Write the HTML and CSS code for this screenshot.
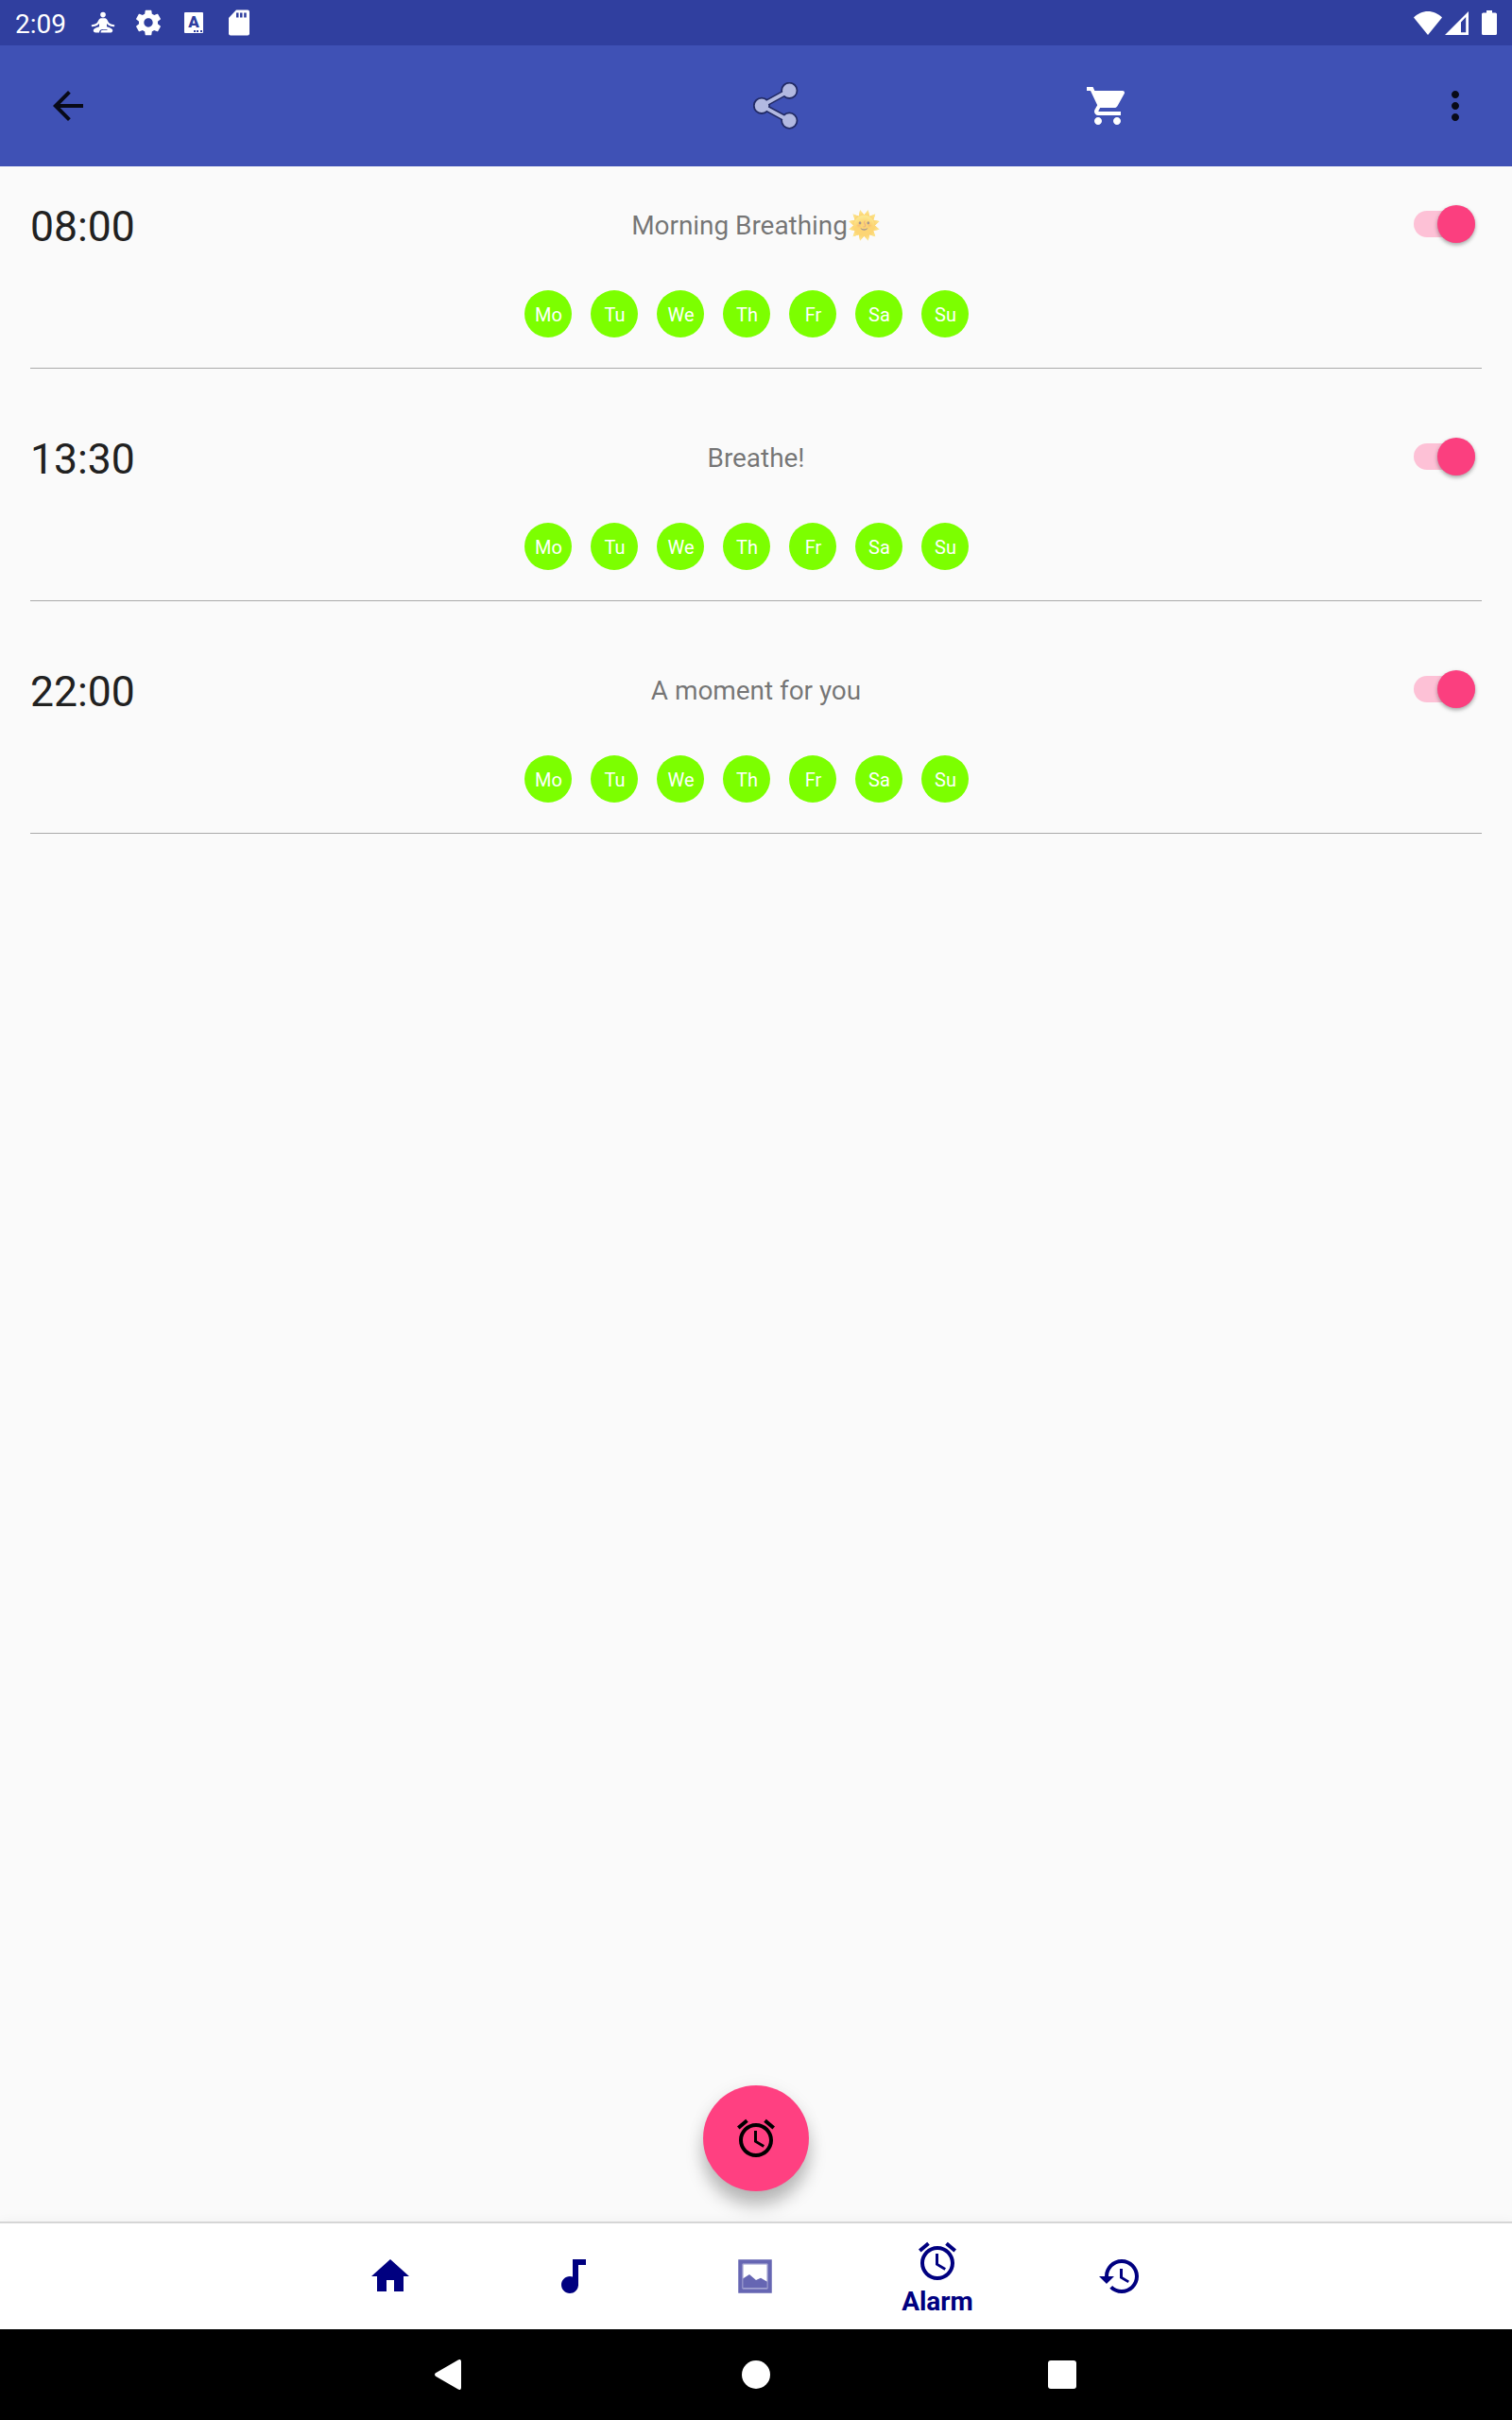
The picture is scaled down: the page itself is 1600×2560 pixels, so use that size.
FILE: index.html
```html
<!DOCTYPE html>
<html lang="en">
<head>
    <meta charset="UTF-8">
    <meta name="viewport" content="width=device-width, initial-scale=1.0">
    <title>Alarms</title>
    <link rel="stylesheet" href="styles.css">
</head>
<body>
    <div class="status-bar">
        <span class="clock">2:09</span>
        <div class="status-icons">
            <!-- meditation app -->
            <svg width="26" height="24" viewBox="0 0 26 24" fill="#fff">
                <circle cx="13" cy="3.6" r="2.8"/>
                <path d="M10.6 7.2h4.8c2.6.9 2.6 4 4.4 5.4 1.500 1.100 3.500 1.500 5.500 1.800l-.3 1.800c-3.400-.1-5.800-.9-8-3.200v3.200c2 .6 5.500 1.800 6.100 3.300.5 1.600-.5 3-2 3H10.500c0-2 1-2.700 3-2.700h4v-.9h-4.800c-2.500 0-3.700 1.500-3.700 3.600H5.500c-1.800 0-3.200-1.200-2.600-3 .6-1.500 4.100-2.700 6.100-3.300v-3.200c-2.200 2.300-4.600 3.100-8 3.200l-.3-1.800c2-.3 4-.7 5.500-1.800 1.800-1.400 1.800-4.500 4.400-5.400z"/>
            </svg>
            <svg width="32" height="32" viewBox="0 0 24 24" fill="#fff">
                <path d="M19.430 12.980c.04-.32.070-.64.070-.98s-.03-.66-.07-.98l2.110-1.650c.19-.15.240-.42.120-.64l-2-3.460c-.12-.22-.39-.3-.61-.22l-2.490 1c-.52-.4-1.080-.73-1.690-.98l-.38-2.650C14.460 2.180 14.250 2 14 2h-4c-.25 0-.46.180-.49.420l-.38 2.650c-.61.250-1.170.590-1.690.980l-2.490-1c-.23-.09-.49 0-.61.220l-2 3.460c-.13.220-.07.490.120.640l2.110 1.650c-.04.320-.07.650-.07.980s.03.660.070.980l-2.110 1.650c-.19.150-.24.420-.12.640l2 3.460c.12.220.390.300.610.220l2.490-1c.52.400 1.080.730 1.690.980l.38 2.650c.03.240.240.420.490.420h4c.25 0 .46-.18.490-.42l.38-2.650c.61-.25 1.170-.59 1.690-.98l2.490 1c.23.090.490 0 .610-.22l2-3.460c.12-.22.070-.49-.12-.64l-2.110-1.650zM12 15.500c-1.930 0-3.500-1.570-3.500-3.500s1.570-3.500 3.500-3.500 3.500 1.570 3.500 3.500-1.570 3.500-3.500 3.500z"/>
            </svg>
            <span class="keyboard-icon">A<i class="keyboard-dots"></i></span>
            <svg width="24" height="28" viewBox="0 0 24 28">
                <path fill="#fff" d="M9 .5h12a2 2 0 0 1 2 2v23a2 2 0 0 1-2 2H3a2 2 0 0 1-2-2V9z"/>
                <path fill="#303f9f" d="M9 3.500h2.500v5H9zM13 3.500h2.500v5H13zM17.200 3.500h2.500v5h-2.500z"/>
            </svg>
        </div>
        <div class="signal-icons">
            <svg width="30" height="25" viewBox="0 0 30 25" fill="#fff">
                <path d="M15 25 0 6.500C4 2.500 9.500 0 15 0s11 2.500 15 6.500z"/>
            </svg>
            <svg width="25" height="25" viewBox="0 0 25 25" fill="#fff">
                <path fill-rule="evenodd" d="M25 0v25H0zM22.200 6l-5.200 5.500V22.200h5.200z"/>
            </svg>
            <svg class="battery" width="16" height="26" viewBox="0 0 16 26" fill="#fff">
                <path d="M5 0h6v2.500h3.500A1.500 1.500 0 0 1 16 4v20.500a1.500 1.500 0 0 1-1.500 1.500h-13A1.500 1.500 0 0 1 0 24.500V4a1.500 1.500 0 0 1 1.500-1.500H5z"/>
            </svg>
        </div>
    </div>

    <div class="toolbar">
        <svg class="icon back" viewBox="0 0 24 24"><path d="M20 11H7.830l5.590-5.590L12 4l-8 8 8 8 1.410-1.410L7.830 13H20v-2z"/></svg>
        <svg class="icon-share" width="48" height="50" viewBox="0 0 48 50">
            <g fill="none" stroke="#222b66" stroke-width="7"><path d="M38.300 8.800 9 24.800l29.300 15.800"/></g>
            <g fill="#b2b9e1" stroke="#222b66" stroke-width="1.800">
                <circle cx="9" cy="24.800" r="8.200"/><circle cx="38.300" cy="8.800" r="8.200"/><circle cx="38.300" cy="40.600" r="8.200"/>
            </g>
            <path fill="none" stroke="#b2b9e1" stroke-width="3.800" d="M36 10 9 24.800 36 39.500"/>
        </svg>
        <svg class="icon cart" viewBox="0 0 24 24"><path d="M7 18c-1.100 0-1.990.9-1.990 2S5.900 22 7 22s2-.9 2-2-.9-2-2-2zM1 2v2h2l3.600 7.590-1.350 2.450c-.16.280-.25.610-.25.960 0 1.100.9 2 2 2h12v-2H7.420c-.14 0-.25-.11-.25-.25l.03-.12.900-1.630h7.450c.75 0 1.410-.41 1.750-1.030l3.580-6.490c.08-.14.120-.31.120-.48 0-.55-.45-1-1-1H5.210l-.94-2H1zm16 16c-1.100 0-1.990.9-1.990 2s.89 2 1.990 2 2-.9 2-2-.9-2-2-2z"/></svg>
        <svg class="icon more" viewBox="0 0 24 24"><path d="M12 8c1.100 0 2-.9 2-2s-.9-2-2-2-2 .9-2 2 .9 2 2 2zm0 2c-1.100 0-2 .9-2 2s.9 2 2 2 2-.9 2-2-.9-2-2-2zm0 6c-1.100 0-2 .9-2 2s.9 2 2 2 2-.9 2-2-.9-2-2-2z"/></svg>
    </div>

    <main class="alarm-list">
        <div class="alarm">
            <div class="alarm-row">
                <span class="time">08:00</span>
                <span class="label">Morning Breathing🌞</span>
                <span class="switch"></span>
            </div>
            <div class="days">
                <span>Mo</span><span>Tu</span><span>We</span><span>Th</span><span>Fr</span><span>Sa</span><span>Su</span>
            </div>
        </div>
        <div class="alarm">
            <div class="alarm-row">
                <span class="time">13:30</span>
                <span class="label">Breathe!</span>
                <span class="switch"></span>
            </div>
            <div class="days">
                <span>Mo</span><span>Tu</span><span>We</span><span>Th</span><span>Fr</span><span>Sa</span><span>Su</span>
            </div>
        </div>
        <div class="alarm">
            <div class="alarm-row">
                <span class="time">22:00</span>
                <span class="label">A moment for you</span>
                <span class="switch"></span>
            </div>
            <div class="days">
                <span>Mo</span><span>Tu</span><span>We</span><span>Th</span><span>Fr</span><span>Sa</span><span>Su</span>
            </div>
        </div>
    </main>

    <div class="fab-row">
        <div class="fab">
            <svg class="icon" viewBox="0 0 24 24"><path d="M22 5.720l-4.600-3.860-1.290 1.530 4.600 3.860L22 5.720zM7.880 3.390L6.600 1.860 2 5.710l1.290 1.530 4.590-3.850zM12.500 8H11v6l4.750 2.850.75-1.230-4-2.370V8zM12 4c-4.970 0-9 4.030-9 9s4.020 9 9 9c4.970 0 9-4.030 9-9s-4.030-9-9-9zm0 16c-3.870 0-7-3.130-7-7s3.130-7 7-7 7 3.130 7 7-3.130 7-7 7z"/></svg>
        </div>
    </div>

    <nav class="bottom-nav">
        <div class="nav-item"><svg class="icon" viewBox="0 0 24 24"><path d="M10 20v-6h4v6h5v-8h3L12 3 2 12h3v8z"/></svg></div>
        <div class="nav-item"><svg class="icon" viewBox="0 0 24 24"><path d="M12 3v9.280c-.47-.17-.97-.28-1.500-.28C8.010 12 6 14.010 6 16.500S8.010 21 10.500 21c2.310 0 4.200-1.750 4.450-4H15V6h4V3h-7z"/></svg></div>
        <div class="nav-item">
            <svg width="36" height="36" viewBox="0 0 36 36">
                <path fill="none" stroke="#6666b3" stroke-width="4.500" d="M2.500 2.500h31v31h-31z"/>
                <path fill="#6666b3" d="M5 20.500l7-4.500 7 6 5-2.200 7 4V30.500H5z"/>
                <path fill="none" stroke="#9494ca" stroke-width="1" d="M5 5h26v26H5z"/>
            </svg>
        </div>
        <div class="nav-item active">
            <svg class="icon" viewBox="0 0 24 24"><path d="M22 5.720l-4.600-3.860-1.290 1.530 4.600 3.860L22 5.720zM7.880 3.390L6.600 1.860 2 5.710l1.290 1.530 4.590-3.850zM12.500 8H11v6l4.750 2.850.75-1.230-4-2.370V8zM12 4c-4.970 0-9 4.030-9 9s4.020 9 9 9c4.970 0 9-4.030 9-9s-4.030-9-9-9zm0 16c-3.870 0-7-3.130-7-7s3.130-7 7-7 7 3.130 7 7-3.130 7-7 7z"/></svg>
            <span>Alarm</span>
        </div>
        <div class="nav-item"><svg class="icon" viewBox="0 0 24 24"><path d="M13 3c-4.970 0-9 4.030-9 9H1l3.890 3.890.070.140L9 12H6c0-3.870 3.130-7 7-7s7 3.130 7 7-3.130 7-7 7c-1.930 0-3.680-.79-4.940-2.060l-1.420 1.420C8.270 19.990 10.510 21 13 21c4.970 0 9-4.030 9-9s-4.030-9-9-9zm-1 5v5l4.280 2.540.72-1.210-3.500-2.080V8H12z"/></svg></div>
    </nav>

    <div class="system-nav">
        <svg width="28" height="32" viewBox="0 0 28 32" fill="#fff"><path d="M1 14.300 24.800.4Q28-1 28 2.200v27.600q0 3.200-3.200 1.800L1 17.700q-2-1.700 0-3.400z"/></svg>
        <span class="home-btn"></span>
        <span class="recents-btn"></span>
    </div>
</body>
</html>
```
FILE: styles.css
```css
* {
    margin: 0;
    padding: 0;
    box-sizing: border-box;
}

body {
    font-family: Roboto, 'Noto Sans', sans-serif;
    background-color: #fafafa;
    width: 1600px;
    height: 2560px;
    display: flex;
    flex-direction: column;
    overflow: hidden;
}

svg {
    display: block;
    flex: none;
}

.icon {
    width: 48px;
    height: 48px;
    fill: currentColor;
}

/* Status bar */
.status-bar {
    height: 48px;
    background-color: #303f9f;
    display: flex;
    align-items: center;
    padding: 0 16px;
    color: #fff;
}

.clock {
    font-size: 28px;
    line-height: 48px;
    width: 80px;
    padding-top: 3px;
}

/* every notification icon sits in a 48px slot */
.status-icons {
    display: grid;
    grid-template-columns: repeat(4, 48px);
    align-items: center;
    justify-items: center;
    margin-left: -11px;
}

.keyboard-icon {
    width: 20px;
    height: 22px;
    background-color: #fff;
    border-radius: 1px;
    color: #303f9f;
    font-size: 17px;
    font-weight: 900;
    line-height: 21px;
    text-align: center;
    position: relative;
}

.keyboard-dots {
    position: absolute;
    right: 1px;
    bottom: 1px;
    width: 9px;
    height: 2px;
    background: repeating-linear-gradient(to right, #303f9f 0 2px, #fff 2px 3.500px);
}

.signal-icons {
    display: flex;
    align-items: center;
    margin-left: auto;
    gap: 3px;
}

.battery {
    margin-left: 11px;
}

/* Toolbar */
.toolbar {
    height: 128px;
    background-color: #3f51b5;
    display: flex;
    align-items: center;
    padding: 0 36px 0 48px;
    color: rgba(0, 0, 0, 0.87);
}

.icon-share {
    margin-left: 701px;
}

.cart {
    margin-left: 303px;
    color: #fff;
}

.more {
    margin-left: auto;
}

/* Alarm list */
.alarm-list {
    flex: 1;
    padding: 0 32px;
}

.alarm {
    height: 246px;
    padding-top: 32px;
    border-bottom: 1px solid #aaa;
}

.alarm:first-child {
    height: 214px;
    padding-top: 0;
}

.alarm-row {
    height: 122px;
    display: grid;
    grid-template-columns: 200px 1fr 200px;
    align-items: center;
}

.time {
    font-size: 44.500px;
    color: #212121;
    padding-top: 6px;
}

.label {
    font-size: 28px;
    letter-spacing: -0.06px;
    color: rgba(0, 0, 0, 0.54);
    text-align: center;
    padding-top: 2px;
}

.switch {
    justify-self: end;
    margin-right: 7px;
    width: 65px;
    height: 28px;
    border-radius: 14px;
    background-color: #fdc1d6;
    display: flex;
    align-items: center;
    justify-content: flex-end;
}

.switch::after {
    content: '';
    width: 40px;
    height: 40px;
    border-radius: 50%;
    background-color: #fb3f7f;
    box-shadow: 0 2px 4px rgba(0, 0, 0, 0.35);
    flex: none;
}

.days {
    display: flex;
    gap: 20px;
    padding: 9px 0 0 523px;
}

.days span {
    width: 50px;
    height: 50px;
    border-radius: 50%;
    background-color: #7cff00;
    color: #fff;
    font-size: 20px;
    line-height: 52px;
    text-align: center;
    padding-left: 1px;
}

/* Floating button */
.fab-row {
    display: flex;
    justify-content: center;
    padding-bottom: 32px;
}

.fab {
    width: 112px;
    height: 112px;
    border-radius: 50%;
    background-color: #ff4081;
    display: flex;
    align-items: center;
    justify-content: center;
    box-shadow: 0 15px 18px rgba(0, 0, 0, 0.25), 0 2px 20px rgba(0, 0, 0, 0.06);
}

/* Bottom navigation */
.bottom-nav {
    height: 114px;
    border-top: 2px solid #d6d6d6;
    background-color: #fff;
    box-shadow: 0 -2px 10px rgba(0, 0, 0, 0.03);
    display: flex;
    padding-left: 316px;
    color: #000080;
}

.nav-item {
    width: 193px;
    display: flex;
    flex-direction: column;
    align-items: center;
    justify-content: center;
}

.active {
    justify-content: flex-start;
    padding-top: 16px;
}

.active span {
    font-size: 28px;
    font-weight: bold;
    line-height: 32px;
    margin-top: 3px;
    padding-left: 1px;
}

/* System navigation */
.system-nav {
    height: 96px;
    background-color: #000;
    display: flex;
    align-items: center;
    justify-content: space-between;
    padding: 0 461px 0 460px;
}

.home-btn {
    width: 30px;
    height: 30px;
    margin-left: 2px;
    border-radius: 50%;
    background-color: #fff;
}

.recents-btn {
    width: 30px;
    height: 30px;
    border-radius: 3px;
    background-color: #fff;
}
```
